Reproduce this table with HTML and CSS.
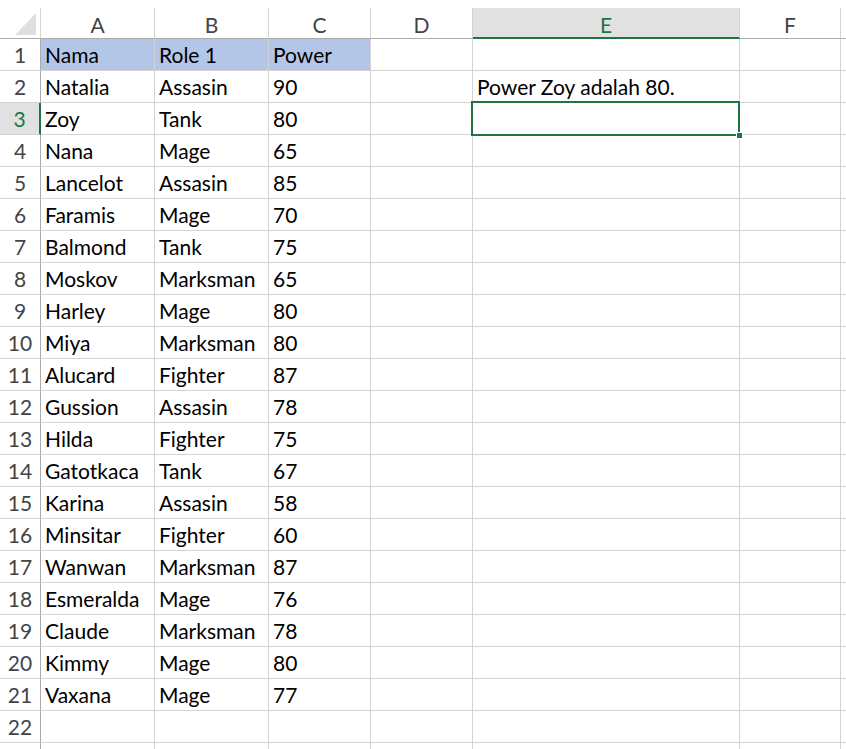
FILE: index.html
```html
<!DOCTYPE html>
<html>
<head>
<meta charset="utf-8">
<link rel="stylesheet" href="styles.css">
</head>
<body>
<div class="wrap">
<div class="sheet">
  <div class="ch corner"><span class="tri"></span></div>
  <div class="ch">A</div><div class="ch">B</div><div class="ch">C</div><div class="ch">D</div><div class="ch sel">E</div><div class="ch">F</div><div class="ch last"></div>

  <div class="rh">1</div><div class="c hd">Nama</div><div class="c hd">Role 1</div><div class="c hd">Power</div><div class="c"></div><div class="c"></div><div class="c"></div><div class="c last"></div>
  <div class="rh">2</div><div class="c">Natalia</div><div class="c">Assasin</div><div class="c">90</div><div class="c"></div><div class="c ov">Power Zoy adalah 80.</div><div class="c"></div><div class="c last"></div>
  <div class="rh sel">3</div><div class="c">Zoy</div><div class="c">Tank</div><div class="c">80</div><div class="c"></div><div class="c"></div><div class="c"></div><div class="c last"></div>
  <div class="rh">4</div><div class="c">Nana</div><div class="c">Mage</div><div class="c">65</div><div class="c"></div><div class="c"></div><div class="c"></div><div class="c last"></div>
  <div class="rh">5</div><div class="c">Lancelot</div><div class="c">Assasin</div><div class="c">85</div><div class="c"></div><div class="c"></div><div class="c"></div><div class="c last"></div>
  <div class="rh">6</div><div class="c">Faramis</div><div class="c">Mage</div><div class="c">70</div><div class="c"></div><div class="c"></div><div class="c"></div><div class="c last"></div>
  <div class="rh">7</div><div class="c">Balmond</div><div class="c">Tank</div><div class="c">75</div><div class="c"></div><div class="c"></div><div class="c"></div><div class="c last"></div>
  <div class="rh">8</div><div class="c">Moskov</div><div class="c">Marksman</div><div class="c">65</div><div class="c"></div><div class="c"></div><div class="c"></div><div class="c last"></div>
  <div class="rh">9</div><div class="c">Harley</div><div class="c">Mage</div><div class="c">80</div><div class="c"></div><div class="c"></div><div class="c"></div><div class="c last"></div>
  <div class="rh">10</div><div class="c">Miya</div><div class="c">Marksman</div><div class="c">80</div><div class="c"></div><div class="c"></div><div class="c"></div><div class="c last"></div>
  <div class="rh">11</div><div class="c">Alucard</div><div class="c">Fighter</div><div class="c">87</div><div class="c"></div><div class="c"></div><div class="c"></div><div class="c last"></div>
  <div class="rh">12</div><div class="c">Gussion</div><div class="c">Assasin</div><div class="c">78</div><div class="c"></div><div class="c"></div><div class="c"></div><div class="c last"></div>
  <div class="rh">13</div><div class="c">Hilda</div><div class="c">Fighter</div><div class="c">75</div><div class="c"></div><div class="c"></div><div class="c"></div><div class="c last"></div>
  <div class="rh">14</div><div class="c">Gatotkaca</div><div class="c">Tank</div><div class="c">67</div><div class="c"></div><div class="c"></div><div class="c"></div><div class="c last"></div>
  <div class="rh">15</div><div class="c">Karina</div><div class="c">Assasin</div><div class="c">58</div><div class="c"></div><div class="c"></div><div class="c"></div><div class="c last"></div>
  <div class="rh">16</div><div class="c">Minsitar</div><div class="c">Fighter</div><div class="c">60</div><div class="c"></div><div class="c"></div><div class="c"></div><div class="c last"></div>
  <div class="rh">17</div><div class="c">Wanwan</div><div class="c">Marksman</div><div class="c">87</div><div class="c"></div><div class="c"></div><div class="c"></div><div class="c last"></div>
  <div class="rh">18</div><div class="c">Esmeralda</div><div class="c">Mage</div><div class="c">76</div><div class="c"></div><div class="c"></div><div class="c"></div><div class="c last"></div>
  <div class="rh">19</div><div class="c">Claude</div><div class="c">Marksman</div><div class="c">78</div><div class="c"></div><div class="c"></div><div class="c"></div><div class="c last"></div>
  <div class="rh">20</div><div class="c">Kimmy</div><div class="c">Mage</div><div class="c">80</div><div class="c"></div><div class="c"></div><div class="c"></div><div class="c last"></div>
  <div class="rh">21</div><div class="c">Vaxana</div><div class="c">Mage</div><div class="c">77</div><div class="c"></div><div class="c"></div><div class="c"></div><div class="c last"></div>
  <div class="rh">22</div><div class="c"></div><div class="c"></div><div class="c"></div><div class="c"></div><div class="c"></div><div class="c"></div><div class="c last"></div>
  <div class="rh"></div><div class="c"></div><div class="c"></div><div class="c"></div><div class="c"></div><div class="c"></div><div class="c"></div><div class="c last"></div>
</div>
<div class="selbox"><span class="handle"></span></div>
</div>
</body>
</html>
```

FILE: styles.css
```css
html, body {
  margin: 0;
  padding: 0;
  background: #fff;
  overflow: hidden;
}
.wrap {
  position: relative;
  width: 846px;
  height: 749px;
  overflow: hidden;
  padding-top: 8px;
  box-sizing: border-box;
  font-family: Lato, "Open Sans", sans-serif;
}
.sheet {
  display: grid;
  grid-template-columns: 41px 114px 114px 102px 102px 267px 101px 5px;
  grid-template-rows: 31px;
  grid-auto-rows: 32px;
}
.ch {
  box-sizing: border-box;
  border-right: 1px solid #d4d4d4;
  border-bottom: 1px solid #ababab;
  display: flex;
  align-items: flex-end;
  justify-content: center;
  padding-bottom: 3px;
  font-size: 21px;
  color: #444;
  line-height: 1;
}
.ch.corner {
  position: relative;
}
.tri {
  position: absolute;
  right: 4px;
  bottom: 3px;
  width: 0;
  height: 0;
  border-left: 21px solid transparent;
  border-bottom: 22px solid #dfdfdf;
}
.ch.sel {
  background: #e1e1e1;
  color: #217346;
  border-bottom: 2px solid #217346;
  padding-bottom: 2px;
}
.ch.last, .c.last {
  border-right: none;
}
.rh {
  box-sizing: border-box;
  border-right: 1px solid #ababab;
  border-bottom: 1px solid #d4d4d4;
  display: flex;
  align-items: flex-end;
  justify-content: center;
  padding-bottom: 5px;
  font-size: 21px;
  color: #444;
  line-height: 1;
}
.rh.sel {
  background: #e1e1e1;
  color: #217346;
  border-right: 2px solid #217346;
}
.c {
  box-sizing: border-box;
  border-right: 1px solid #d4d4d4;
  border-bottom: 1px solid #d4d4d4;
  display: flex;
  align-items: flex-end;
  padding: 0 0 5px 4px;
  font-size: 21px;
  color: #000;
  line-height: 1;
  white-space: nowrap;
}
.c.hd {
  background: #b4c6e7;
}
.selbox {
  position: absolute;
  left: 471px;
  top: 101px;
  width: 269px;
  height: 35px;
  box-sizing: border-box;
  border: 2px solid #217346;
}
.handle {
  position: absolute;
  right: -4px;
  bottom: -4px;
  width: 5px;
  height: 5px;
  background: #217346;
  border: 1px solid #fff;
  margin: -1px;
}
```
